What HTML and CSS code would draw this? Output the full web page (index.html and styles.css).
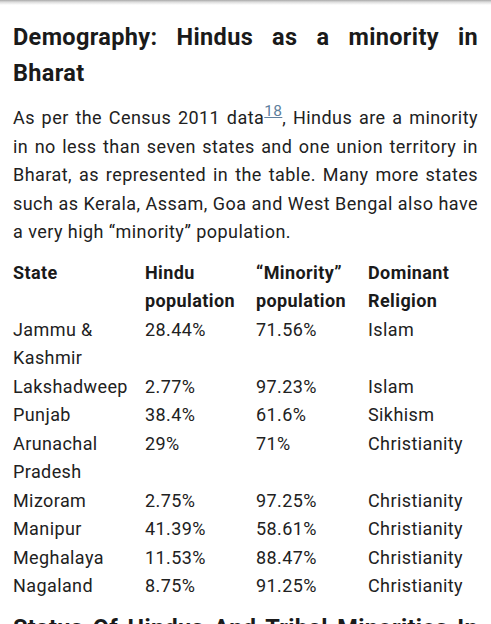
FILE: index.html
```html
<!DOCTYPE html>
<html lang="en">
<head>
    <meta charset="UTF-8">
    <meta name="viewport" content="width=device-width, initial-scale=1.0">
    <title>Demography</title>
    <link rel="stylesheet" href="styles.css">
</head>
<body>
    <div class="top-shadow"></div>
    <div class="article">
        <h2>Demography: Hindus as a minority in Bharat</h2>
        <p>As per the Census 2011 data<sup><a href="#ref18">18</a></sup>, Hindus are a minority in no less than seven states and one union territory in Bharat, as represented in the table. Many more states such as Kerala, Assam, Goa and West Bengal also have a very high &ldquo;minority&rdquo; population.</p>

        <table class="data-table">
            <colgroup>
                <col class="c-state">
                <col class="c-hindu">
                <col class="c-minority">
                <col>
            </colgroup>
            <thead>
                <tr>
                    <th>State</th>
                    <th>Hindu population</th>
                    <th>&ldquo;Minority&rdquo; population</th>
                    <th>Dominant Religion</th>
                </tr>
            </thead>
            <tbody>
                <tr><td>Jammu &amp; Kashmir</td><td>28.44%</td><td>71.56%</td><td>Islam</td></tr>
                <tr><td>Lakshadweep</td><td>2.77%</td><td>97.23%</td><td>Islam</td></tr>
                <tr><td>Punjab</td><td>38.4%</td><td>61.6%</td><td>Sikhism</td></tr>
                <tr><td>Arunachal Pradesh</td><td>29%</td><td>71%</td><td>Christianity</td></tr>
                <tr><td>Mizoram</td><td>2.75%</td><td>97.25%</td><td>Christianity</td></tr>
                <tr><td>Manipur</td><td>41.39%</td><td>58.61%</td><td>Christianity</td></tr>
                <tr><td>Meghalaya</td><td>11.53%</td><td>88.47%</td><td>Christianity</td></tr>
                <tr><td>Nagaland</td><td>8.75%</td><td>91.25%</td><td>Christianity</td></tr>
            </tbody>
        </table>

        <h2>Status Of Hindus And Tribal Minorities In Bharat</h2>
    </div>
</body>
</html>
```

FILE: styles.css
```css
/* page */
body {
    margin: 0;
    background: #ffffff;
    color: #212121;
    font-family: Roboto, 'Liberation Sans', sans-serif;
}

.top-shadow {
    height: 5px;
    background: linear-gradient(to bottom, #a9a9a9, #dcdcdc 40%, #ffffff);
}

.article {
    padding: 14px 13px 0 13px;
}

h2 {
    margin: 0;
    font-size: 23.5px;
    line-height: 36px;
    font-weight: 700;
    letter-spacing: 0.35px;
    color: #1a1a1a;
    text-align: justify;
}

p {
    margin: 13px 0 12px 0;
    font-size: 18px;
    line-height: 28.5px;
    letter-spacing: 0.45px;
    text-align: justify;
}

sup {
    font-size: 15.5px;
    line-height: 0;
    vertical-align: 8px;
    letter-spacing: 0.3px;
}

sup a {
    color: #5f7f9d;
    text-decoration: underline;
}

/* table */
.data-table {
    width: 100%;
    table-layout: fixed;
    border-collapse: collapse;
    font-size: 18px;
    line-height: 28.5px;
    letter-spacing: 0.4px;
    margin-bottom: 9px;
}

.c-state {
    width: 132px;
}

.c-hindu {
    width: 111px;
}

.c-minority {
    width: 112px;
}

.data-table th,
.data-table td {
    padding: 0 4px 0 0;
    text-align: left;
    vertical-align: top;
}

.data-table th {
    font-weight: 700;
    color: #1a1a1a;
}
```
